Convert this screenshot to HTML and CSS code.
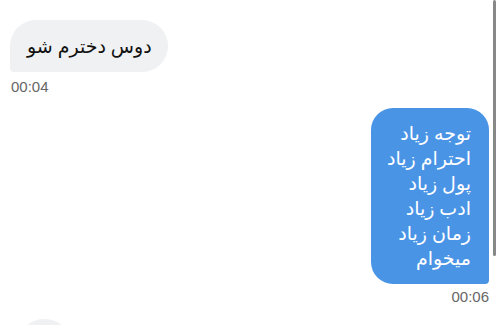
FILE: index.html
```html
<!DOCTYPE html>
<html lang="fa">

<head>
    <meta charset="UTF-8">
    <meta name="viewport" content="width=device-width, initial-scale=1.0">
    <title>Chat</title>
    <link rel="stylesheet" href="styles.css">
</head>

<body>
    <div class="chat">
        <div class="msg msg-in">
            <div class="bubble" dir="rtl">دوس دخترم شو</div>
            <div class="time">00:04</div>
        </div>

        <div class="msg msg-out">
            <div class="bubble" dir="rtl">توجه زیاد<br>احترام زیاد<br>پول زیاد<br>ادب زیاد<br>زمان زیاد<br>میخوام</div>
            <div class="time">00:06</div>
        </div>

        <div class="msg msg-in">
            <div class="bubble bubble-stub"></div>
        </div>
    </div>
    <div class="scrollbar"></div>
</body>

</html>
```

FILE: styles.css
```css
body {
    margin: 0;
    overflow: hidden;
    background-color: #fff;
    font-family: 'Noto Sans', 'DejaVu Sans', sans-serif;
    height: 325px;
}

.chat {
    display: flex;
    flex-direction: column;
    padding: 20px 11px 0 10px;
}

.msg {
    display: flex;
    flex-direction: column;
}

.msg-in {
    align-items: flex-start;
}

.msg-out {
    align-items: flex-end;
    margin-top: 12px;
}

.bubble {
    font-size: 19px;
    line-height: 24px;
}

.msg-in .bubble {
    background-color: #eff1f2;
    color: #111;
    padding: 14px 16px 14px 17px;
    border-radius: 26px 26px 26px 4px;
}

.msg-out .bubble {
    background-color: #4a94e6;
    color: #fff;
    font-size: 19px;
    line-height: 25px;
    padding: 13px 18px 13px 16px;
    border-radius: 22px 22px 4px 22px;
}

.bubble-stub {
    width: 20px;
    height: 30px;
    margin-left: 8px;
}

.time {
    font-family: 'Liberation Sans', Arial, sans-serif;
    font-size: 15px;
    line-height: 18px;
    color: #666;
    margin-top: 6px;
    margin-left: 1px;
}

.msg-out .time {
    margin-top: 4px;
    margin-bottom: 13px;
}

.scrollbar {
    position: absolute;
    top: 0;
    right: 4px;
    width: 3px;
    height: 256px;
    background-color: #888;
    border-radius: 2px;
}
```
